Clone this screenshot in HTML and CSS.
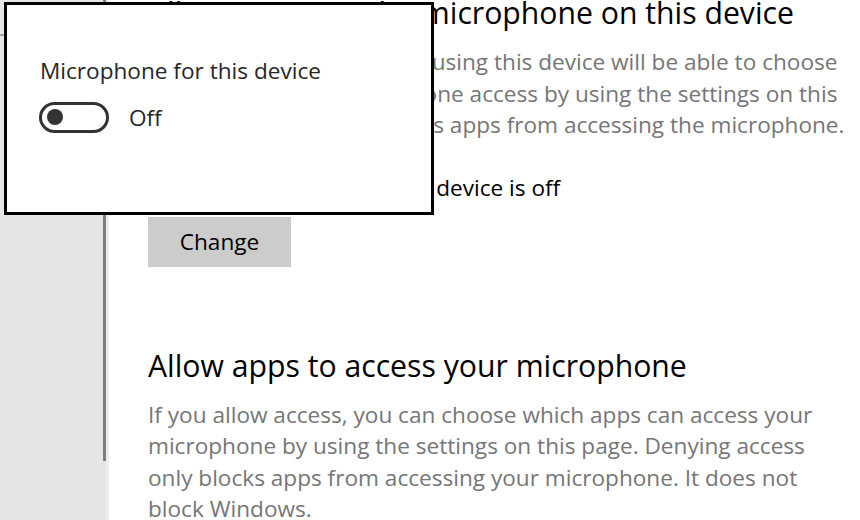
FILE: index.html
```html
<!DOCTYPE html>
<html lang="en">
<head>
    <meta charset="UTF-8">
    <title>Microphone</title>
    <link rel="stylesheet" href="styles.css">
</head>
<body>
    <div class="nav">
        <div class="nav-list">
            <div class="nav-rule"></div>
        </div>
        <div class="nav-scroll">
            <div class="thumb"></div>
        </div>
    </div>

    <div class="content">
        <h2 class="first">Allow access to the microphone on this device</h2>
        <p class="desc">If you allow access, people using this device will be able to choose<br>if their apps have microphone access by using the settings on this<br>page. Denying access blocks apps from accessing the microphone.</p>
        <p class="status">Microphone access for this device is off</p>
        <button class="change">Change</button>

        <h2 class="second">Allow apps to access your microphone</h2>
        <p class="desc desc-apps">If you allow access, you can choose which apps can access your<br>microphone by using the settings on this page. Denying access<br>only blocks apps from accessing your microphone. It does not<br>block Windows.</p>
    </div>

    <div class="popup">
        <div class="popup-label">Microphone for this device</div>
        <div class="toggle-row">
            <div class="toggle"><span class="knob"></span></div>
            <span class="toggle-text">Off</span>
        </div>
    </div>
</body>
</html>
```

FILE: styles.css
```css
html, body {
    margin: 0;
    padding: 0;
}

body {
    width: 860px;
    height: 520px;
    overflow: hidden;
    display: flex;
    background-color: #fff;
    font-family: "Open Sans", Lato, sans-serif;
    position: relative;
}

/* left navigation pane */
.nav {
    width: 109px;
    flex-shrink: 0;
    display: flex;
    background-color: #e6e6e6;
}

.nav-list {
    flex: 1;
    padding-top: 34px;
}

.nav-rule {
    height: 2px;
    background-color: #a3a3a3;
}

.nav-scroll {
    width: 6px;
    display: flex;
}

.thumb {
    width: 3px;
    height: 461px;
    background-color: #7d7d7d;
}

.nav-scroll::after {
    content: "";
    width: 3px;
    background-color: #ededed;
}

/* page content */
.content {
    padding-left: 39px;
    flex: 1;
}

h2 {
    margin: 0;
    font-size: 30.2px;
    font-weight: 400;
    color: #000;
    white-space: nowrap;
}

h2.first {
    line-height: 30px;
    margin-top: -2px;
}

h2.second {
    line-height: 40px;
    margin-top: 79px;
}

.desc {
    margin: 18px 0 0;
    font-size: 22.6px;
    line-height: 31.5px;
    color: #767676;
    white-space: nowrap;
}

.desc-apps {
    margin-top: 13px;
}

.status {
    margin: 31.5px 0 0;
    font-size: 22.6px;
    line-height: 31.5px;
    color: #000;
}

.change {
    display: block;
    margin-top: 13px;
    width: 143px;
    height: 50px;
    padding: 0;
    border: none;
    background-color: #cccccc;
    font-family: inherit;
    font-size: 22.6px;
    line-height: 31.5px;
    color: #000;
}

/* flyout over the page */
.popup {
    position: absolute;
    left: 4px;
    top: 2px;
    width: 391px;
    height: 157px;
    border: 3px solid #000;
    background-color: #fff;
    padding: 50px 0 0 33px;
}

.popup-label {
    font-size: 22.6px;
    line-height: 31.5px;
    color: #262626;
}

.toggle-row {
    display: flex;
    align-items: center;
    margin-top: 15px;
    font-size: 22.6px;
    line-height: 31.5px;
    color: #262626;
}

.toggle {
    width: 59px;
    height: 25px;
    border: 3px solid #333;
    border-radius: 16px;
    display: flex;
    align-items: center;
    padding-left: 5px;
    margin-left: -1px;
}

.knob {
    width: 16px;
    height: 16px;
    border-radius: 50%;
    background-color: #333;
}

.toggle-text {
    margin-left: 20px;
}
```
